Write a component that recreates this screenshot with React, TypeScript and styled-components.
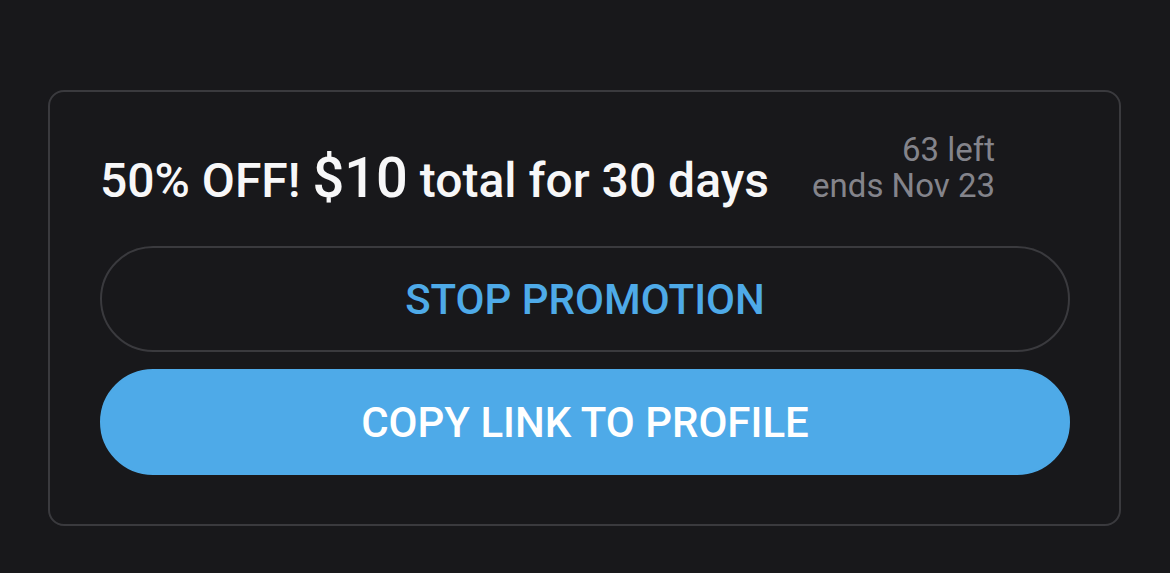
import React from 'react'
import styled, { createGlobalStyle } from 'styled-components'

const GlobalStyle = createGlobalStyle`
  html, body {
    margin: 0;
    padding: 0;
    background: #18181b;
  }
  body {
    font-family: Roboto, "Liberation Sans", Arial, sans-serif;
    -webkit-font-smoothing: antialiased;
  }
`

const Page = styled.div`
  padding: 90px 49px 46px 48px;
`

const Card = styled.div`
  border: 2px solid #3a3a3e;
  border-radius: 16px;
  padding: 40px 49px 49px 50px;
  display: flex;
  flex-direction: column;
`

const TitleRow = styled.div`
  display: flex;
  justify-content: space-between;
  align-items: last baseline;
  padding-right: 75px;
  margin-bottom: 37px;
`

const Title = styled.div`
  color: #f7f7f8;
  font-size: 48px;
  font-weight: 500;
  line-height: 56px;
`

const Price = styled.span`
  font-size: 56px;
`

const Meta = styled.div`
  color: #84848b;
  font-size: 33px;
  line-height: 36px;
  text-align: right;
`

const MetaLine = styled.div`
  white-space: nowrap;
`

const Button = styled.button<{ primary?: boolean }>`
  height: 106px;
  width: 100%;
  border-radius: 53px;
  border: 2px solid ${(p) => (p.primary ? '#4eaae8' : '#3a3a3e')};
  background: ${(p) => (p.primary ? '#4eaae8' : 'transparent')};
  color: ${(p) => (p.primary ? '#ffffff' : '#4eaae8')};
  font-family: Roboto, "Liberation Sans", Arial, sans-serif;
  font-size: 42px;
  font-weight: 500;
  cursor: pointer;
  & + & {
    margin-top: 17px;
  }
`

const App = () => {
  return (
    <>
      <GlobalStyle />
      <Page>
        <Card>
          <TitleRow>
            <Title>
              50% OFF! <Price>$10</Price> total for 30 days
            </Title>
            <Meta>
              <MetaLine>63 left</MetaLine>
              <MetaLine>ends Nov 23</MetaLine>
            </Meta>
          </TitleRow>
          <Button>STOP PROMOTION</Button>
          <Button primary>COPY LINK TO PROFILE</Button>
        </Card>
      </Page>
    </>
  )
}

export default App
